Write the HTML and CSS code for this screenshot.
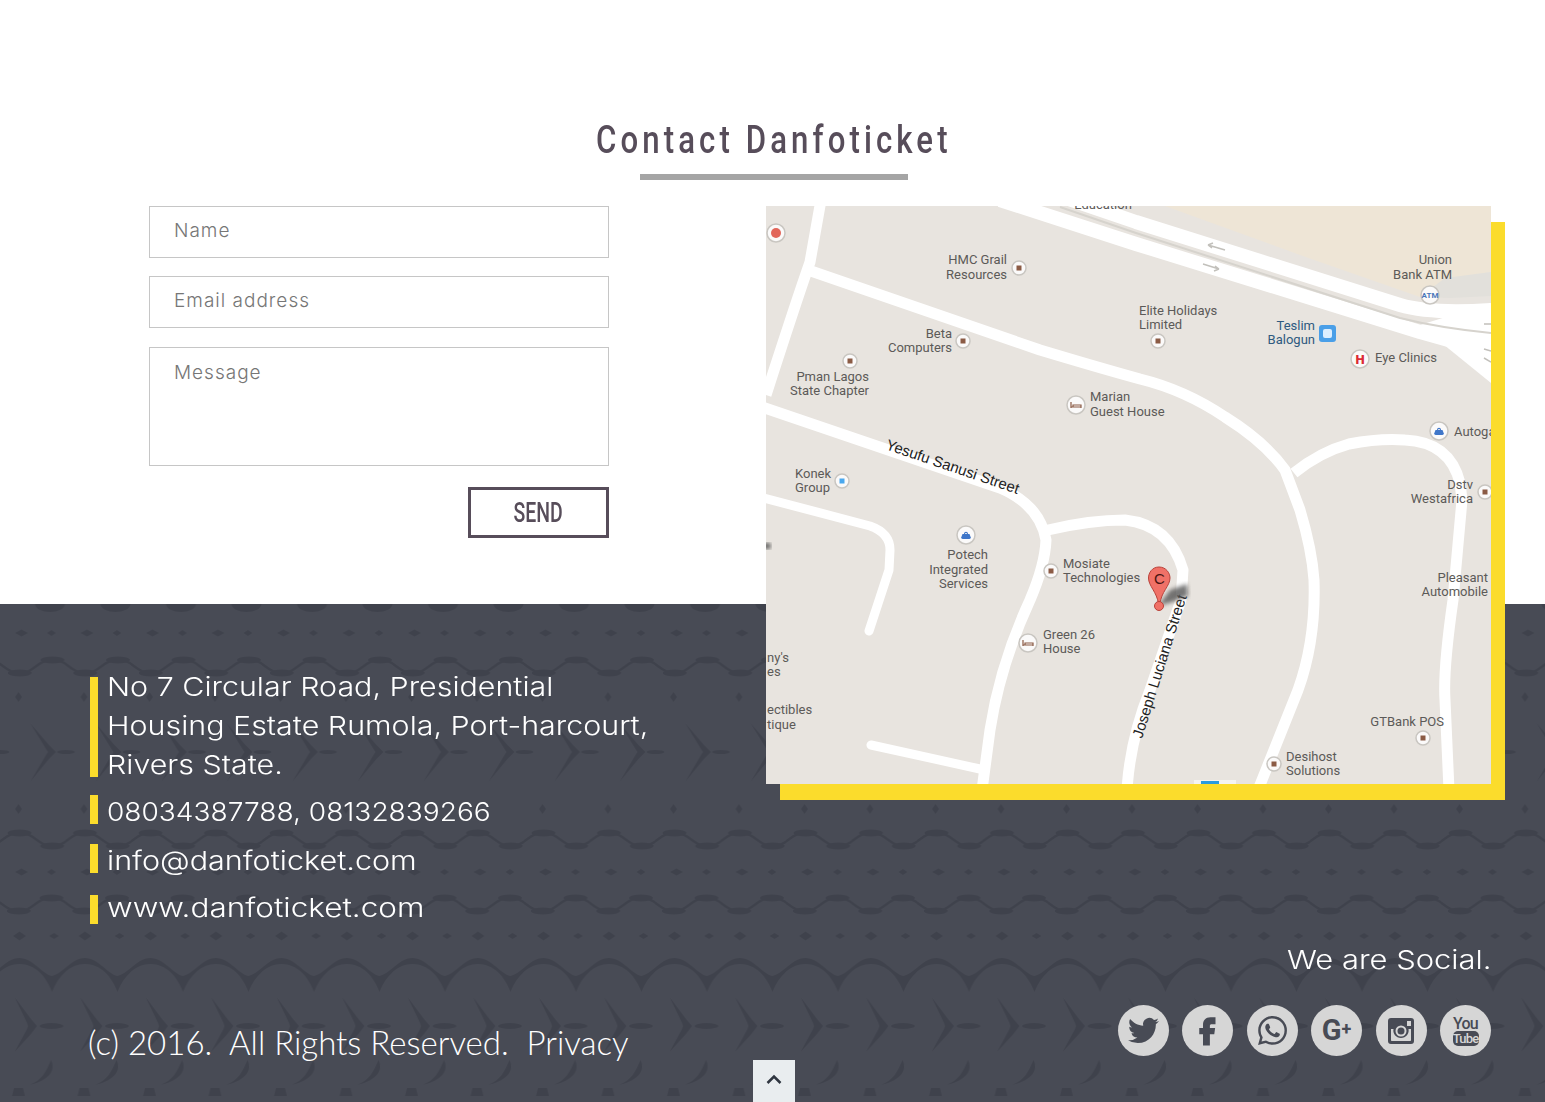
FILE: index.html
```html
<!DOCTYPE html>
<html lang="en">
<head>
    <meta charset="UTF-8">
    <meta name="viewport" content="width=device-width, initial-scale=1.0">
    <title>Contact Danfoticket</title>
    <link rel="stylesheet" href="styles.css">
</head>
<body>
    <section class="contact-section">
        <h1 class="contact-title"><span>Contact Danfoticket</span></h1>
        <div class="title-rule"></div>

        <div class="contact-row">
            <form class="contact-form">
                <input class="field" type="text" placeholder="Name">
                <input class="field" type="email" placeholder="Email address">
                <textarea class="field field-message" placeholder="Message"></textarea>
                <button class="btn-send" type="button"><span>SEND</span></button>
            </form>

            <div class="map-box">
                <svg class="map" viewBox="766 206 725 578" width="725" height="578">
                    <defs>
                        <filter id="soft"><feGaussianBlur stdDeviation="2"></feGaussianBlur></filter>
                        <g id="poi">
                            <circle class="poi-ring" r="7"></circle>
                            <rect class="poi-brown" x="-2.5" y="-2.5" width="5" height="5"></rect>
                        </g>
                        <g id="poi-bed">
                            <circle class="poi-ring" r="9"></circle>
                            <path class="poi-bed" d="M-5-3v6M-5 2H5M5 0v3M-3 0H5V2H-3z"></path>
                        </g>
                        <g id="poi-bag">
                            <circle class="poi-ring" r="9"></circle>
                            <path class="poi-blue" d="M-5 3-3.500-1H-2C-2-4 2-4 2-1H3.500L5 3 3.500 4H-3.500ZM-1-1H1C1-2.500-1-2.500-1-1Z"></path>
                        </g>
                    </defs>

                    <rect class="map-land" x="766" y="206" width="725" height="578"></rect>
                    <polygon class="map-sand" points="1165,206 1491,206 1491,272 1445,280 1420,297 1300,255"></polygon>
                    <polygon class="map-shade" points="1420,297 1445,278 1491,272 1491,296 1450,298"></polygon>

                    <!-- highway -->
                    <path class="road road-wide" d="M1060 196 1136 222 1400 305Q1430 314 1491 310"></path>
                    <path class="road road-wide" d="M1000 200 1136 244 1420 332 1491 352"></path>
                    <polygon class="road-fill" points="1420,325 1491,303 1491,383 1438,340"></polygon>
                    <path class="road-median" d="M1060 207 1136 233 1400 318Q1440 328 1491 333"></path>
                    <path class="road-arrow" d="M1225 250 1208 245M1208 245l5-2M1208 245l4 3"></path>
                    <path class="road-arrow" d="M1203 264 1219 269M1219 269l-5 2M1219 269l-4-3"></path>
                    <path class="road-arrow" d="M1484 324H1491M1484 349 1491 351M1484 358 1491 362"></path>

                    <!-- streets -->
                    <path class="road" d="M821 200 810 262Q795 305 766 395"></path>
                    <path class="road" d="M808 270 1040 350Q1100 368 1140 379 1185 390 1225 417 1265 442 1285 470L1300 510Q1312 550 1314 580 1316 640 1298 690 1280 735 1258 790"></path>
                    <path class="road" d="M1294 473Q1320 452 1349 444 1380 438 1405 440 1450 442 1460 483L1462 500 1453 600Q1443 670 1445 700L1449 790"></path>
                    <path class="road" d="M762 407 1000 488Q1040 505 1046 540 1045 565 1030 600 1000 665 990 730L982 790"></path>
                    <path class="road" d="M1048 530Q1090 520 1125 520 1170 525 1183 570L1181 600 1150 690Q1130 740 1127 790"></path>
                    <path class="road road-thin" d="M760 497 870 526Q890 533 890 550L889 570 869 631"></path>
                    <path class="road road-thin" d="M871 745 980 769"></path>

                    <ellipse class="map-smudge" cx="767" cy="546" rx="4" ry="3"></ellipse>
                    <rect class="map-logo-bg" x="1194" y="780" width="42" height="6"></rect>
                    <rect class="map-logo" x="1201" y="781" width="18" height="5"></rect>

                    <!-- place labels -->
                    <text class="map-label anchor-mid" x="1103" y="209">Education</text>
                    <text class="map-label anchor-end" x="1007" y="264">HMC Grail</text>
                    <text class="map-label anchor-end" x="1007" y="279">Resources</text>
                    <text class="map-label anchor-end" x="952" y="338">Beta</text>
                    <text class="map-label anchor-end" x="952" y="352">Computers</text>
                    <text class="map-label anchor-end" x="869" y="381">Pman Lagos</text>
                    <text class="map-label anchor-end" x="869" y="395">State Chapter</text>
                    <text class="map-label" x="1139" y="315">Elite Holidays</text>
                    <text class="map-label" x="1139" y="329">Limited</text>
                    <text class="map-label map-label-transit anchor-end" x="1315" y="330">Teslim</text>
                    <text class="map-label map-label-transit anchor-end" x="1315" y="344">Balogun</text>
                    <text class="map-label anchor-end" x="1452" y="264">Union</text>
                    <text class="map-label anchor-end" x="1452" y="279">Bank ATM</text>
                    <text class="map-label" x="1375" y="362">Eye Clinics</text>
                    <text class="map-label" x="1090" y="401">Marian</text>
                    <text class="map-label" x="1090" y="416">Guest House</text>
                    <text class="map-label" x="1454" y="436">Autoga</text>
                    <text class="map-label anchor-end" x="1473" y="489">Dstv</text>
                    <text class="map-label anchor-end" x="1473" y="503">Westafrica</text>
                    <text class="map-label" x="795" y="478">Konek</text>
                    <text class="map-label" x="795" y="492">Group</text>
                    <text class="map-label anchor-end" x="988" y="559">Potech</text>
                    <text class="map-label anchor-end" x="988" y="574">Integrated</text>
                    <text class="map-label anchor-end" x="988" y="588">Services</text>
                    <text class="map-label" x="1063" y="568">Mosiate</text>
                    <text class="map-label" x="1063" y="582">Technologies</text>
                    <text class="map-label" x="1043" y="639">Green 26</text>
                    <text class="map-label" x="1043" y="653">House</text>
                    <text class="map-label" x="767" y="662">ny's</text>
                    <text class="map-label" x="767" y="676">es</text>
                    <text class="map-label" x="767" y="714">ectibles</text>
                    <text class="map-label" x="767" y="729">tique</text>
                    <text class="map-label anchor-end" x="1488" y="582">Pleasant</text>
                    <text class="map-label anchor-end" x="1488" y="596">Automobile</text>
                    <text class="map-label anchor-end" x="1444" y="726">GTBank POS</text>
                    <text class="map-label" x="1286" y="761">Desihost</text>
                    <text class="map-label" x="1286" y="775">Solutions</text>

                    <!-- markers -->
                    <use href="#poi" x="1019" y="268"></use>
                    <use href="#poi" x="963" y="341"></use>
                    <use href="#poi" x="850" y="361"></use>
                    <use href="#poi" x="1158" y="341"></use>
                    <use href="#poi" x="1485" y="492"></use>
                    <use href="#poi" x="1051" y="571"></use>
                    <use href="#poi" x="1423" y="738"></use>
                    <use href="#poi" x="1274" y="764"></use>
                    <use href="#poi-bed" x="1076" y="405"></use>
                    <use href="#poi-bed" x="1028" y="643"></use>
                    <use href="#poi-bag" x="1439" y="431"></use>
                    <use href="#poi-bag" x="966" y="535"></use>

                    <circle class="poi-ring" cx="776" cy="233" r="9"></circle>
                    <circle class="poi-red" cx="776" cy="233" r="5"></circle>
                    <circle class="poi-ring" cx="842" cy="481" r="7"></circle>
                    <rect class="poi-sky" x="839.500" y="478.500" width="5" height="5"></rect>
                    <circle class="poi-ring" cx="1360" cy="359" r="9"></circle>
                    <text class="poi-h" x="1360" y="363.500">H</text>
                    <circle class="poi-ring" cx="1430" cy="295" r="9"></circle>
                    <text class="poi-atm" x="1430" y="298">ATM</text>
                    <rect class="poi-bus" x="1319" y="325" width="17" height="17" rx="3"></rect>
                    <rect class="poi-bus-body" x="1323" y="329" width="9" height="9" rx="2"></rect>

                    <!-- street names -->
                    <text class="street-label" transform="translate(885 449) rotate(18.800)">Yesufu Sanusi Street</text>
                    <text class="street-label" transform="translate(1142 739) rotate(-72.500)">Joseph Luciana Street</text>

                    <!-- location pin -->
                    <path class="pin-shadow" d="M1158 606 1170 590 1187 584 1188 596 1172 602Z"></path>
                    <path class="pin-body" d="M1159 567C1152 567 1148.500 573 1148.500 578 1148.500 586 1157 592 1158.500 604H1160C1161 592 1170 586 1170 578 1170 573 1166 567 1159 567Z"></path>
                    <circle class="pin-body" cx="1159" cy="606" r="4.500"></circle>
                    <text class="pin-letter" x="1159.500" y="584">C</text>
                </svg>
            </div>
        </div>
    </section>

    <footer class="site-footer">
        <svg class="footer-pattern" width="100%" height="100%">
            <defs>
                <g id="wave">
                    <path class="wave-line" d="M-65.500 0C-50 0-48 13-32.750 13-18 13-16 0 0 0 16 0 18 13 32.750 13 48 13 50 0 65.500 0"></path>
                    <ellipse cx="-65.500" cy="0" rx="12" ry="3.500"></ellipse>
                    <ellipse cx="0" cy="0" rx="12" ry="3.500"></ellipse>
                    <ellipse cx="65.500" cy="0" rx="12" ry="3.500"></ellipse>
                    <ellipse cx="-32.750" cy="13" rx="12" ry="3.500"></ellipse>
                    <ellipse cx="32.750" cy="13" rx="12" ry="3.500"></ellipse>
                </g>
                <pattern id="footer-tile" width="65.500" height="498" patternUnits="userSpaceOnUse">
                    <!-- top lumps -->
                    <ellipse cx="50" cy="0" rx="15" ry="8"></ellipse>
                    <!-- dots -->
                    <path d="M15 29 21.500 25.500 28 29 21.500 32.500ZM47 29 51.500 26 56 29 51.500 32Z"></path>
                    <use href="#wave" x="52.500" y="56"></use>
                    <path d="M18.500 88 22 93 18.500 98 15 93Z"></path>
                    <!-- first chevron row -->
                    <path d="M30 119 49 141 56 148 49 155 30 178 46 151 48 148 46 145Z"></path>
                    <ellipse cx="66" cy="148" rx="9" ry="2"></ellipse>
                    <ellipse cx="0.500" cy="148" rx="9" ry="2"></ellipse>
                    <path d="M18.500 200 22 205 18.500 210 15 205Z"></path>
                    <use href="#wave" x="19.500" y="229"></use>
                    <path d="M15 268 21.500 264.500 28 268 21.500 271.500ZM47 268 51.500 265 56 268 51.500 271Z"></path>
                    <use href="#wave" x="51.500" y="294"></use>
                    <path d="M13 332 19.500 327.500 26 332 19.500 336.500ZM49 332 54 329 59 332 54 335Z"></path>
                    <!-- scallops -->
                    <path d="M19.500 354C33 354 42 370 52 372 62 370 72 354 85 354V360C70 360 58 372 52 388 46 372 35 360 19.500 360 4 360-7 372-13.500 388-19 372-31 360-46 360V354C-33 354-23 370-13.500 372-3 370 6 354 19.500 354Z"></path>
                    <!-- second chevron row -->
                    <path d="M14.500 393 31 415 37 422 31 430 14.500 448 27 425 28 422 27 419Z"></path>
                    <ellipse cx="51.500" cy="422" rx="12" ry="3"></ellipse>
                    <!-- crescents -->
                    <path d="M51 456C56 466 50 476 29.500 481 42 476 46 468 51 456Z"></path>
                    <path d="M14 484H23L25 492H12Z"></path>
                </pattern>
            </defs>
            <rect class="pattern-fill" width="100%" height="100%"></rect>
        </svg>

        <ul class="info-list">
            <li class="info-item info-address"><span>No 7 Circular Road, Presidential<br>Housing Estate Rumola, Port-harcourt,<br>Rivers State.</span></li>
            <li class="info-item info-line info-phone"><span>08034387788, 08132839266</span></li>
            <li class="info-item info-line info-mail"><span>info@danfoticket.com</span></li>
            <li class="info-item info-line info-web"><span>www.danfoticket.com</span></li>
        </ul>

        <div class="footer-bottom">
            <p class="copyright">(c) 2016.&nbsp; All Rights Reserved.&nbsp; Privacy</p>
            <div class="social-box">
                <p class="social-title"><span>We are Social.</span></p>
                <div class="social-icons">
                    <a class="social-icon" href="#">
                        <svg viewBox="0 0 24 24" width="31" height="31"><path d="M23.953 4.57a10 10 0 01-2.825.775 4.958 4.958 0 002.163-2.723c-.951.555-2.005.959-3.127 1.184a4.92 4.92 0 00-8.384 4.482C7.69 8.095 4.067 6.13 1.64 3.162a4.822 4.822 0 00-.666 2.475c0 1.71.87 3.213 2.188 4.096a4.904 4.904 0 01-2.228-.616v.06a4.923 4.923 0 003.946 4.827 4.996 4.996 0 01-2.212.085 4.936 4.936 0 004.604 3.417 9.867 9.867 0 01-6.102 2.105c-.39 0-.779-.023-1.17-.067a13.995 13.995 0 007.557 2.209c9.053 0 13.998-7.496 13.998-13.985 0-.21 0-.42-.015-.63A9.935 9.935 0 0024 4.59z"></path></svg>
                    </a>
                    <a class="social-icon" href="#">
                        <svg viewBox="0 0 24 24" width="30" height="30"><path d="M14.800 6.500H18V1H14C10 1 8 3.500 8 7.200V9.500H5V14.500H8V23.500H13.500V14.500H17L17.700 9.500H13.500V7.800C13.500 7 14 6.500 14.800 6.500Z"></path></svg>
                    </a>
                    <a class="social-icon" href="#">
                        <svg viewBox="0 0 24 24" width="29" height="29"><path d="M17.472 14.382c-.297-.149-1.758-.867-2.03-.967-.273-.099-.471-.148-.67.15-.197.297-.767.966-.94 1.164-.173.199-.347.223-.644.075-.297-.15-1.255-.463-2.39-1.475-.883-.788-1.48-1.761-1.653-2.059-.173-.297-.018-.458.13-.606.134-.133.298-.347.446-.52.149-.174.198-.298.298-.497.099-.198.05-.371-.025-.52-.075-.149-.669-1.612-.916-2.207-.242-.579-.487-.5-.669-.51-.173-.008-.371-.01-.57-.01-.198 0-.52.074-.792.372-.272.297-1.04 1.016-1.04 2.479 0 1.462 1.065 2.875 1.213 3.074.149.198 2.096 3.2 5.077 4.487.709.306 1.262.489 1.694.625.712.227 1.36.195 1.871.118.571-.085 1.758-.719 2.006-1.413.248-.694.248-1.289.173-1.413-.074-.124-.272-.198-.57-.347m-5.421 7.403h-.004a9.87 9.87 0 01-5.031-1.378l-.361-.214-3.741.982.998-3.648-.235-.374a9.86 9.86 0 01-1.51-5.26c.001-5.45 4.436-9.884 9.888-9.884 2.64 0 5.122 1.03 6.988 2.898a9.825 9.825 0 012.893 6.994c-.003 5.45-4.437 9.884-9.885 9.884m8.413-18.297A11.815 11.815 0 0012.05 0C5.495 0 .16 5.335.157 11.892c0 2.096.547 4.142 1.588 5.945L.057 24l6.305-1.654a11.882 11.882 0 005.683 1.448h.005c6.554 0 11.89-5.335 11.893-11.893a11.821 11.821 0 00-3.48-8.413z"></path></svg>
                    </a>
                    <a class="social-icon social-gplus" href="#">G<span class="gplus-mark">+</span></a>
                    <a class="social-icon" href="#">
                        <svg viewBox="0 0 26 26" width="26" height="26">
                            <path fill-rule="evenodd" d="M3 0H23C25 0 26 1 26 3V23C26 25 25 26 23 26H3C1 26 0 25 0 23V3C0 1 1 0 3 0ZM3 11V22C3 22.600 3.400 23 4 23H22C22.600 23 23 22.600 23 22V11H20.500C21.500 15.500 18 20 13 20 8 20 4.500 15.500 5.500 11ZM19 3V8H23V3ZM13 7.500A5.500 5.500 0 1 0 13 18.500 5.500 5.500 0 1 0 13 7.500Z"></path>
                            <circle class="insta-lens" cx="13" cy="13" r="3.500"></circle>
                        </svg>
                    </a>
                    <a class="social-icon social-youtube" href="#">
                        <span class="yt-you">You</span>
                        <span class="yt-tube">Tube</span>
                    </a>
                </div>
            </div>
        </div>

        <a class="back-top" href="#">
            <svg viewBox="0 0 16 10" width="16" height="10"><path d="M1.500 9 8 2.500 14.500 9"></path></svg>
        </a>
    </footer>
</body>
</html>
```

FILE: styles.css
```css
* {
    box-sizing: border-box;
}
body {
    margin: 0;
    background: #fff;
    font-family: "Inter", "Liberation Sans", sans-serif;
    overflow-x: hidden;
}

/* contact block */
.contact-section {
    height: 604px;
    padding-top: 118px;
}
.contact-title {
    margin: 0;
    padding-left: 3px;
    text-align: center;
    font-family: "Roboto", sans-serif;
    font-size: 38px;
    font-weight: 500;
    line-height: 44px;
    letter-spacing: 5px;
    color: #574d5a;
}
.contact-title span {
    display: inline-block;
    transform: scaleX(0.82);
}
.title-rule {
    width: 268px;
    height: 6px;
    margin: 12px 0 0 640px;
    background: #a5a5a5;
}
.contact-row {
    display: flex;
    align-items: flex-start;
    margin-top: 26px;
    padding-left: 149px;
}
.contact-form {
    display: flex;
    flex-direction: column;
    gap: 18px;
    width: 460px;
}
.field {
    width: 100%;
    height: 52px;
    padding: 0 24px 3px;
    border: 1px solid #c6c6c6;
    border-radius: 0;
    background: #fff;
    font-family: "Inter", "Liberation Sans", sans-serif;
    font-size: 19px;
    font-weight: 300;
    letter-spacing: 1px;
    outline: none;
}
.field::placeholder {
    color: #767676;
    opacity: 1;
}
.field-message {
    height: 119px;
    margin-top: 1px;
    padding-top: 13px;
    resize: none;
}
.btn-send {
    align-self: flex-end;
    width: 141px;
    height: 51px;
    margin-top: 3px;
    padding: 0;
    border: 3px solid #574d5a;
    background: #fff;
    color: #574d5a;
    font-family: "Roboto", sans-serif;
    font-size: 27px;
    font-weight: 500;
}
.btn-send span {
    display: inline-block;
    transform: scaleX(0.72);
}

/* map */
.map-box {
    position: relative;
    z-index: 2;
    width: 725px;
    height: 578px;
    margin-left: 157px;
    box-shadow: 14px 16px 0 #fbdc2c;
}
.map {
    display: block;
}
.map-land { fill: #e8e4df; }
.map-sand { fill: #eee5d6; }
.map-shade { fill: #e2e0db; }
.road {
    fill: none;
    stroke: #fff;
    stroke-width: 11;
    stroke-linejoin: round;
}
.road-wide { stroke-width: 14; }
.road-thin { stroke-width: 9; stroke-linecap: round; }
.road-fill { fill: #fff; }
.road-median { fill: none; stroke: #d6d3cd; stroke-width: 2; }
.road-arrow { fill: none; stroke: #c2c0bb; stroke-width: 1.500; }
.map-smudge { fill: #555; filter: url(#soft); }
.map-logo-bg { fill: #f4f4f2; }
.map-logo { fill: #2b9be0; }
.map-label {
    font-family: "Roboto", "Liberation Sans", sans-serif;
    font-size: 13px;
    fill: #5c5a58;
}
.map-label-transit { fill: #2f5a80; }
.anchor-end { text-anchor: end; }
.anchor-mid { text-anchor: middle; }
.street-label {
    font-family: "Liberation Sans", sans-serif;
    font-size: 15px;
    fill: #222;
}
.poi-ring { fill: #fbfafa; stroke: #c9c6c1; stroke-width: 1.500; }
.poi-brown { fill: #8b5b45; }
.poi-red { fill: #e2665a; }
.poi-sky { fill: #4aa8ee; }
.poi-blue { fill: #3f76c9; fill-rule: evenodd; }
.poi-bed { fill: none; stroke: #8b5b45; stroke-width: 1.200; }
.poi-h {
    font-family: "Roboto", sans-serif;
    font-size: 13px;
    font-weight: 900;
    text-anchor: middle;
    fill: #dc2a35;
}
.poi-atm {
    font-family: "Roboto", sans-serif;
    font-size: 8px;
    font-weight: 700;
    text-anchor: middle;
    fill: #4a76b8;
}
.poi-bus { fill: #4a9fe8; }
.poi-bus-body { fill: #dceeff; }
.pin-body { fill: #f07167; stroke: #b9423a; stroke-width: 1; }
.pin-shadow { fill: #555; opacity: 0.8; filter: url(#soft); }
.pin-letter {
    font-family: "Liberation Sans", sans-serif;
    font-size: 15px;
    text-anchor: middle;
    fill: #4a1512;
}

/* footer */
.site-footer {
    position: relative;
    height: 498px;
    padding: 73px 54px 0 90px;
    background: #484b55;
    color: #fff;
    overflow: hidden;
}
.footer-pattern {
    position: absolute;
    top: 0;
    left: 0;
}
.footer-pattern path,
.footer-pattern ellipse {
    fill: #3f424c;
}
.footer-pattern .wave-line {
    fill: none;
    stroke: #3f424c;
    stroke-width: 2.500;
}
.pattern-fill {
    fill: url(#footer-tile);
}
.info-list {
    position: relative;
    width: 600px;
    margin: 0;
    padding: 0;
    list-style: none;
    font-size: 26px;
    font-weight: 300;
    white-space: nowrap;
}
.info-item {
    display: flow-root;
    padding-left: 9px;
    border-left: 8px solid #fbdc2c;
}
.info-item span {
    display: block;
    transform-origin: left center;
}
.info-address {
    height: 100px;
    line-height: 39px;
}
.info-address span {
    margin-top: -10px;
    transform: scaleX(1.17);
}
.info-line {
    height: 29px;
}
.info-phone {
    margin-top: 18px;
    line-height: 34px;
}
.info-phone span { transform: scaleX(1.08); }
.info-mail {
    margin-top: 20px;
    line-height: 34px;
}
.info-mail span { transform: scaleX(1.175); }
.info-web {
    margin-top: 22px;
    line-height: 26px;
}
.info-web span { transform: scaleX(1.21); }
.footer-bottom {
    position: relative;
    display: flex;
    justify-content: space-between;
    align-items: flex-end;
    margin: 18px 0 0 -2px;
}
.copyright {
    margin: 0 0 -6px;
    font-family: "Lato", sans-serif;
    font-size: 33px;
    font-weight: 300;
}
.social-title {
    margin: 0 0 27px;
    text-align: right;
    font-size: 26px;
    font-weight: 300;
    line-height: 36px;
}
.social-title span {
    display: block;
    transform-origin: right center;
    transform: scaleX(1.19);
}
.social-icons {
    display: flex;
    gap: 13.500px;
}
.social-icon {
    display: flex;
    flex-direction: column;
    align-items: center;
    justify-content: center;
    width: 51px;
    height: 51px;
    border-radius: 50%;
    background: #d6d6d6;
    color: #484b55;
    text-decoration: none;
}
.social-icon svg {
    fill: #484b55;
}
.insta-lens {
    fill: #484b55;
}
.social-gplus {
    flex-direction: row;
    font-family: "Roboto", sans-serif;
    font-size: 29px;
    font-weight: 700;
    line-height: 1;
}
.gplus-mark {
    font-size: 18px;
    margin-top: -4px;
}
.yt-you {
    font-family: "Roboto", sans-serif;
    font-size: 16px;
    font-weight: 500;
    letter-spacing: -0.800px;
    line-height: 15px;
}
.yt-tube {
    width: 26px;
    height: 15px;
    border-radius: 5px;
    background: #484b55;
    color: #d6d6d6;
    text-align: center;
    font-family: "Roboto", sans-serif;
    font-size: 13px;
    font-weight: 500;
    letter-spacing: -0.800px;
    line-height: 15px;
}
.back-top {
    position: absolute;
    left: 753px;
    bottom: 0;
    display: flex;
    align-items: center;
    justify-content: center;
    width: 42px;
    height: 42px;
    background: #e9edef;
}
.back-top svg {
    margin-bottom: 4px;
}
.back-top path {
    fill: none;
    stroke: #2f3640;
    stroke-width: 2.500;
}
```
